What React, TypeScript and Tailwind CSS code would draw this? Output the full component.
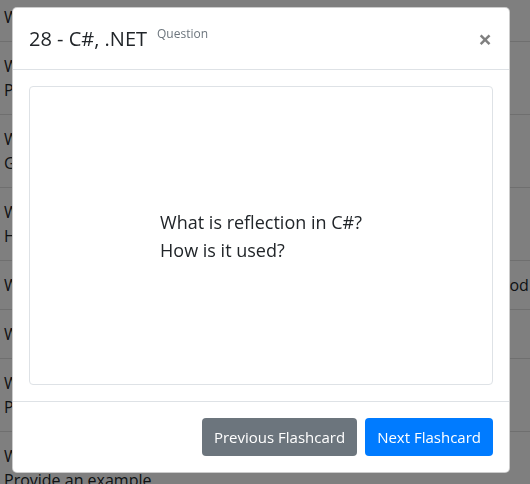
const rows = [
  ["What is the difference between const and readonly in C#?"],
  ["What are value types and reference types in C#?", "Provide examples of each."],
  ["What is garbage collection in .NET?", "Give an overview of how it works."],
  ["What is the difference between IEnumerable and IQueryable?", "How do they differ in execution?"],
  ["What's the difference between virtual method and an abstract method"],
  ["What are delegates and events in C#?"],
  ["What is dependency injection in .NET Core?", "Provide a simple example."],
  ["What are extension methods in C#?", "Provide an example."],
];

export default function App() {
  return (
    <div className="relative h-screen w-full overflow-hidden bg-white font-['Open_Sans',sans-serif] text-[16px] text-[#212529]">
      {/* page behind the modal */}
      <ul className="mt-[-8px]">
        {rows.map((r, i) => (
          <li key={i} className="overflow-hidden whitespace-nowrap border-t border-[#dfdfdf] px-[4px] py-3 leading-6">
            <div>{r[0]}</div>
            {r[1] && <div>{r[1]}</div>}
          </li>
        ))}
      </ul>

      {/* backdrop */}
      <div className="fixed inset-0 bg-black/50" />

      {/* modal */}
      <div className="fixed left-[12px] top-[7px] flex w-[498px] flex-col rounded-[5px] border border-black/20 bg-white">
        <div className="flex items-start justify-between border-b border-[#dee2e6] px-4 pb-[15px] pt-4">
          <div className="flex items-start">
            <h5 className="text-[20px] font-normal leading-[30px] text-[#212529]">28 - C#, .NET</h5>
            <span className="ml-[10px] mt-[2px] text-[12px] leading-4 text-[#6c757d]">Question</span>
          </div>
          <button className="mr-[1px] text-[24px] font-bold leading-[30px] text-black/50">×</button>
        </div>

        <div className="p-4">
          <div className="flex h-[299px] items-center justify-center rounded-[4px] border border-[#dee2e6]">
            <p className="text-[18px] leading-[28px] text-[#212529]">
              What is reflection in C#?
              <br />
              How is it used?
            </p>
          </div>
        </div>

        <div className="flex items-center justify-end gap-2 border-t border-[#dee2e6] px-4 py-4">
          <button className="h-[38px] rounded-[4px] bg-[#6c757d] px-3 text-[15px] leading-6 text-white">
            Previous Flashcard
          </button>
          <button className="h-[38px] rounded-[4px] bg-[#007bff] px-3 text-[15px] leading-6 text-white">
            Next Flashcard
          </button>
        </div>
      </div>
    </div>
  );
}
